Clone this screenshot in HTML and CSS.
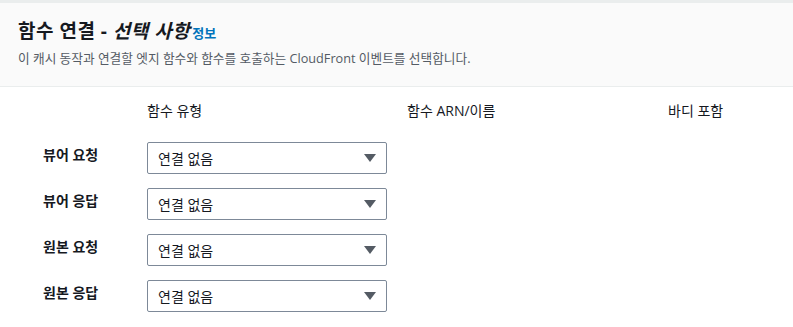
FILE: index.html
```html
<!DOCTYPE html>
<html lang="ko">
<head>
<meta charset="UTF-8">
<meta name="viewport" content="width=device-width, initial-scale=1.0">
<title>함수 연결</title>
<link rel="stylesheet" href="styles.css">
</head>
<body>
  <div class="panel-header">
    <h2>함수 연결 - <em>선택 사항</em><a href="#" class="info-link">정보</a></h2>
    <p class="desc">이 캐시 동작과 연결할 엣지 함수와 함수를 호출하는 CloudFront 이벤트를 선택합니다.</p>
  </div>

  <div class="assoc-grid">
    <div></div>
    <div class="col-head">함수 유형</div>
    <div class="col-head">함수 ARN/이름</div>
    <div class="col-head">바디 포함</div>

    <div class="row-label">뷰어 요청</div>
    <div class="select"><span>연결 없음</span><span class="caret"></span></div>
    <div></div>
    <div></div>

    <div class="row-label">뷰어 응답</div>
    <div class="select"><span>연결 없음</span><span class="caret"></span></div>
    <div></div>
    <div></div>

    <div class="row-label">원본 요청</div>
    <div class="select"><span>연결 없음</span><span class="caret"></span></div>
    <div></div>
    <div></div>

    <div class="row-label">원본 응답</div>
    <div class="select"><span>연결 없음</span><span class="caret"></span></div>
    <div></div>
    <div></div>
  </div>
</body>
</html>
```

FILE: styles.css
```css
* {
  margin: 0;
  padding: 0;
  box-sizing: border-box;
}

body {
  font-family: 'Open Sans', 'Noto Sans CJK KR', sans-serif;
  background: #fff;
  color: #16191f;
}

.panel-header {
  background: #fafafa;
  border-top: 3px solid #eaeded;
  border-bottom: 1px solid #eaeded;
  height: 87px;
  padding: 15px 18px 0;
}

.panel-header h2 {
  font-size: 19px;
  font-weight: 700;
  letter-spacing: 0.5px;
  line-height: 26px;
}

.panel-header em {
  font-style: italic;
}

.info-link {
  font-size: 13px;
  color: #0073bb;
  text-decoration: none;
  letter-spacing: 0;
  margin-left: 2px;
}

.desc {
  font-size: 12.7px;
  color: #545b64;
  line-height: 20px;
  margin-top: 2px;
}

.assoc-grid {
  display: grid;
  grid-template-columns: 104px 260px 261px 1fr;
  row-gap: 14px;
  padding: 13px 0 0 43px;
}

.col-head {
  font-size: 14px;
  line-height: 22px;
  margin-bottom: 6px;
}

.row-label {
  font-size: 14px;
  font-weight: 700;
  line-height: 22px;
  padding-top: 2px;
}

.select {
  width: 240px;
  height: 32px;
  border: 1px solid #7d8998;
  border-radius: 2px;
  display: flex;
  align-items: center;
  justify-content: space-between;
  padding: 0 10px;
  font-size: 14px;
}

.caret {
  width: 0;
  height: 0;
  border-left: 6px solid transparent;
  border-right: 6px solid transparent;
  border-top: 8px solid #545b64;
}
```
